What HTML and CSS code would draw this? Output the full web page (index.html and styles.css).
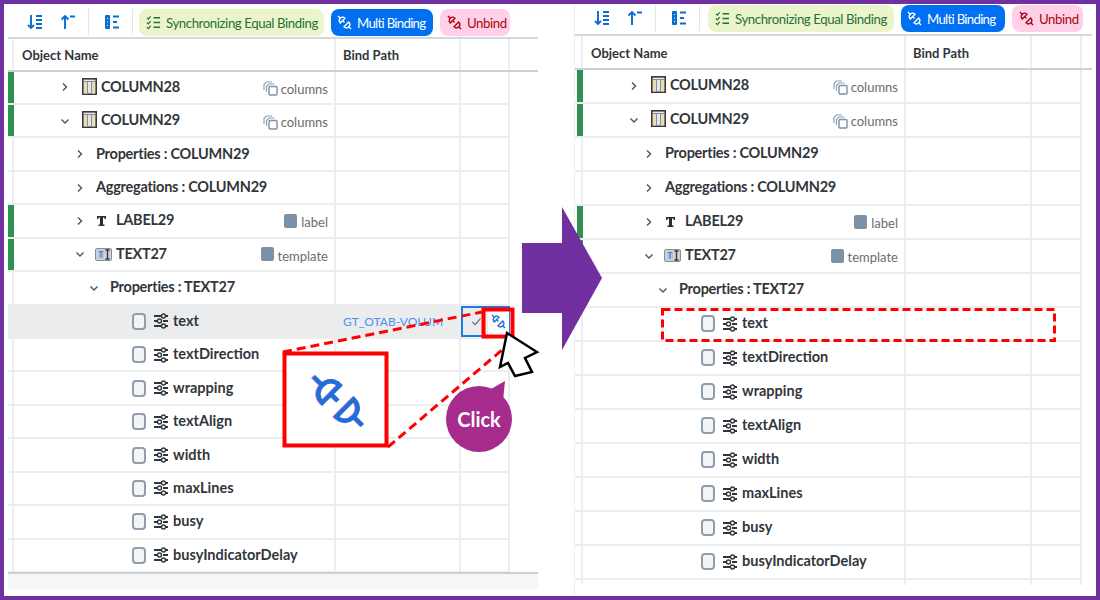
FILE: index.html
```html
<!DOCTYPE html>
<html>
  <head>
    <meta charset="utf-8">
    <title>Multi Binding - Unbind</title>
    <link rel="stylesheet" href="styles.css">
  </head>
  <body>
    <!-- icon set -->
    <svg class="defs" width="0" height="0">
      <symbol id="i-sort" viewBox="0 0 16 16"><path d="M4 1v13M1 11l3 3 3-3M9 2h6M9 6h6M9 10h6M9 14h6" fill="none" stroke="#0a6ed1" stroke-width="1.900"/></symbol>
      <symbol id="i-up" viewBox="0 0 16 16"><path d="M5 15V2M1.500 5.500 5 2l3.500 3.500M10 2.500h5" fill="none" stroke="#0a6ed1" stroke-width="1.900"/></symbol>
      <symbol id="i-tree" viewBox="0 0 16 16"><rect x="1" y="1" width="5" height="14" rx="1" fill="#0a6ed1"/><path d="M3 4.500h1M3 8h1M3 11.500h1" stroke="#fff"/><path d="M9 2.500h6M9 8h4M9 13.500h6" stroke="#0a6ed1" stroke-width="1.800"/></symbol>
      <symbol id="i-check" viewBox="0 0 16 16"><path d="M1 3l1.500 1.500L5 1.500M1 8l1.500 1.500L5 6.500M1 13l1.500 1.500L5 11.500" fill="none" stroke="#256f3a" stroke-width="1.300"/><path d="M8 3h7M8 8h7M8 13h7" stroke="#256f3a" stroke-width="1.600"/></symbol>
      <symbol id="i-bind" viewBox="0 0 16 16"><path d="M1 1l2.500 2.500M12.500 12.500 15 15M6 6l2 2" fill="none" stroke="currentColor"/><path d="M3.500 8.500l5-5C7 2 5 2 3.500 3.500S2 7 3.500 8.500z" fill="none" stroke="currentColor"/><path d="M7.500 12.500l5-5c1.500 1.500 1.500 3.500 0 5s-3.500 1.500-5 0z" fill="none" stroke="currentColor"/></symbol>
      <symbol id="i-table" viewBox="0 0 15 17"><rect x=".8" y=".8" width="13.400" height="15.400" fill="#dfe8f2" stroke="#3a3a3a" stroke-width="1.600"/><rect x="2" y="4" width="3.500" height="11.500" fill="#ecdcb4"/><rect x="9.500" y="4" width="3.500" height="11.500" fill="#ecdcb4"/><path d="M2 3.500h11M5.500 4v12M9.500 4v12" stroke="#8d8d8d"/></symbol>
      <symbol id="i-t" viewBox="0 0 15 15"><path d="M3 3h9v3h-1.500V4.500H9v7h1.500V13h-6v-1.500H6v-7H4.500V6H3z" fill="#2b2b2b"/></symbol>
      <symbol id="i-text" viewBox="0 0 17 13"><rect x=".5" y=".5" width="16" height="12" rx="1.500" fill="#cfd2d5" stroke="#8b8e91"/><rect x="3" y="2.500" width="6" height="8" fill="#a9c4e6"/><path d="M4 3.500h4M6 3.500v6" stroke="#4d7fbf" stroke-width="1.200"/><path d="M10.500 2h4M10.500 11h4M12.500 2v9" stroke="#333" stroke-width="1.300"/></symbol>
      <symbol id="i-prop" viewBox="0 0 16 16"><path d="M1 3h7M1 8h3M1 13h7M10 8h5M13 3h2M13 13h2" stroke="#32363a" stroke-width="1.800"/><circle cx="10.500" cy="3" r="2" fill="none" stroke="#32363a" stroke-width="1.400"/><circle cx="6.500" cy="8" r="2" fill="none" stroke="#32363a" stroke-width="1.400"/><circle cx="10.500" cy="13" r="2" fill="none" stroke="#32363a" stroke-width="1.400"/></symbol>
      <symbol id="i-copies" viewBox="0 0 15 15"><path d="M1 9V3.500L3.500 1H9M3.500 11V5.500L6 3h5.500" fill="none" stroke="#8ea1b5" stroke-width="1.200"/><rect x="6" y="5.500" width="8" height="8.500" rx="1" fill="none" stroke="#7b91a8" stroke-width="1.400"/></symbol>
      <symbol id="i-right" viewBox="0 0 12 12"><path d="M4 2.500 7.500 6 4 9.500" fill="none" stroke="#4a5560" stroke-width="1.400"/></symbol>
      <symbol id="i-down" viewBox="0 0 12 12"><path d="M2.500 4.500 6 8l3.500-3.500" fill="none" stroke="#4a5560" stroke-width="1.400"/></symbol>
      <symbol id="i-tick" viewBox="0 0 12 12"><path d="M1.500 6.500 4.500 9.500 10.500 2.500" fill="none" stroke="#4a6a94" stroke-width="1.200"/></symbol>
    </svg>

    <div class="frame">
      <!-- before -->
      <section class="panel before">
        <div class="toolbar">
          <svg class="tool"><use href="#i-sort"/></svg>
          <svg class="tool"><use href="#i-up"/></svg>
          <span class="sep"></span>
          <svg class="tool"><use href="#i-tree"/></svg>
          <span class="sep"></span>
          <span class="btn sync"><svg class="btn-icon"><use href="#i-check"/></svg>Synchronizing Equal Binding</span>
          <span class="btn multi"><svg class="btn-icon"><use href="#i-bind"/></svg>Multi Binding</span>
          <span class="btn unbind"><svg class="btn-icon"><use href="#i-bind"/></svg>Unbind</span>
        </div>
        <div class="head">
          <div class="gutter"></div>
          <div class="cell th first">Object Name</div>
          <div class="cell th">Bind Path</div>
          <div class="cell"></div>
        </div>

        <div class="row">
          <div class="gutter mark"></div>
          <div class="cell tree lv1"><svg class="chev"><use href="#i-right"/></svg><svg class="ico-table"><use href="#i-table"/></svg><b class="caps">COLUMN28</b><span class="role"><svg class="ico-copies"><use href="#i-copies"/></svg>columns</span></div>
          <div class="cell"></div><div class="cell"></div>
        </div>
        <div class="row">
          <div class="gutter mark"></div>
          <div class="cell tree lv1"><svg class="chev"><use href="#i-down"/></svg><svg class="ico-table"><use href="#i-table"/></svg><b class="caps">COLUMN29</b><span class="role"><svg class="ico-copies"><use href="#i-copies"/></svg>columns</span></div>
          <div class="cell"></div><div class="cell"></div>
        </div>
        <div class="row">
          <div class="gutter"></div>
          <div class="cell tree lv2"><svg class="chev"><use href="#i-right"/></svg><b class="caps">Properties : COLUMN29</b></div>
          <div class="cell"></div><div class="cell"></div>
        </div>
        <div class="row">
          <div class="gutter"></div>
          <div class="cell tree lv2"><svg class="chev"><use href="#i-right"/></svg><b class="caps">Aggregations : COLUMN29</b></div>
          <div class="cell"></div><div class="cell"></div>
        </div>
        <div class="row">
          <div class="gutter mark"></div>
          <div class="cell tree lv2 ctl"><svg class="chev"><use href="#i-right"/></svg><svg class="ico-t"><use href="#i-t"/></svg><b class="caps">LABEL29</b><span class="role"><i class="square"></i>label</span></div>
          <div class="cell"></div><div class="cell"></div>
        </div>
        <div class="row">
          <div class="gutter mark"></div>
          <div class="cell tree lv2 ctl"><svg class="chev"><use href="#i-down"/></svg><svg class="ico-text"><use href="#i-text"/></svg><b class="caps">TEXT27</b><span class="role"><i class="square"></i>template</span></div>
          <div class="cell"></div><div class="cell"></div>
        </div>
        <div class="row">
          <div class="gutter"></div>
          <div class="cell tree lv3"><svg class="chev"><use href="#i-down"/></svg><b class="caps">Properties : TEXT27</b></div>
          <div class="cell"></div><div class="cell"></div>
        </div>
        <div class="row selected">
          <div class="gutter"></div>
          <div class="cell tree item"><span class="box"></span><svg class="ico-prop"><use href="#i-prop"/></svg><b>text</b></div>
          <div class="cell path">GT_OTAB-VOLUM</div>
          <div class="cell actions"><svg class="tick"><use href="#i-tick"/></svg><span class="unlink"><svg><use href="#i-bind"/></svg></span></div>
        </div>
        <div class="row"><div class="gutter"></div><div class="cell tree item"><span class="box"></span><svg class="ico-prop"><use href="#i-prop"/></svg><b>textDirection</b></div><div class="cell"></div><div class="cell"></div></div>
        <div class="row"><div class="gutter"></div><div class="cell tree item"><span class="box"></span><svg class="ico-prop"><use href="#i-prop"/></svg><b>wrapping</b></div><div class="cell"></div><div class="cell"></div></div>
        <div class="row"><div class="gutter"></div><div class="cell tree item"><span class="box"></span><svg class="ico-prop"><use href="#i-prop"/></svg><b>textAlign</b></div><div class="cell"></div><div class="cell"></div></div>
        <div class="row"><div class="gutter"></div><div class="cell tree item"><span class="box"></span><svg class="ico-prop"><use href="#i-prop"/></svg><b>width</b></div><div class="cell"></div><div class="cell"></div></div>
        <div class="row"><div class="gutter"></div><div class="cell tree item"><span class="box"></span><svg class="ico-prop"><use href="#i-prop"/></svg><b>maxLines</b></div><div class="cell"></div><div class="cell"></div></div>
        <div class="row"><div class="gutter"></div><div class="cell tree item"><span class="box"></span><svg class="ico-prop"><use href="#i-prop"/></svg><b>busy</b></div><div class="cell"></div><div class="cell"></div></div>
        <div class="row"><div class="gutter"></div><div class="cell tree item"><span class="box"></span><svg class="ico-prop"><use href="#i-prop"/></svg><b>busyIndicatorDelay</b></div><div class="cell"></div><div class="cell"></div></div>
        <div class="foot"></div>
      </section>

      <!-- after -->
      <section class="panel after">
        <div class="toolbar">
          <svg class="tool"><use href="#i-sort"/></svg>
          <svg class="tool"><use href="#i-up"/></svg>
          <span class="sep"></span>
          <svg class="tool"><use href="#i-tree"/></svg>
          <span class="sep"></span>
          <span class="btn sync"><svg class="btn-icon"><use href="#i-check"/></svg>Synchronizing Equal Binding</span>
          <span class="btn multi"><svg class="btn-icon"><use href="#i-bind"/></svg>Multi Binding</span>
          <span class="btn unbind"><svg class="btn-icon"><use href="#i-bind"/></svg>Unbind</span>
        </div>
        <div class="head">
          <div class="gutter"></div>
          <div class="cell th first">Object Name</div>
          <div class="cell th">Bind Path</div>
          <div class="cell"></div>
        </div>

        <div class="row">
          <div class="gutter mark"></div>
          <div class="cell tree lv1"><svg class="chev"><use href="#i-right"/></svg><svg class="ico-table"><use href="#i-table"/></svg><b class="caps">COLUMN28</b><span class="role"><svg class="ico-copies"><use href="#i-copies"/></svg>columns</span></div>
          <div class="cell"></div><div class="cell"></div>
        </div>
        <div class="row">
          <div class="gutter mark"></div>
          <div class="cell tree lv1"><svg class="chev"><use href="#i-down"/></svg><svg class="ico-table"><use href="#i-table"/></svg><b class="caps">COLUMN29</b><span class="role"><svg class="ico-copies"><use href="#i-copies"/></svg>columns</span></div>
          <div class="cell"></div><div class="cell"></div>
        </div>
        <div class="row">
          <div class="gutter"></div>
          <div class="cell tree lv2"><svg class="chev"><use href="#i-right"/></svg><b class="caps">Properties : COLUMN29</b></div>
          <div class="cell"></div><div class="cell"></div>
        </div>
        <div class="row">
          <div class="gutter"></div>
          <div class="cell tree lv2"><svg class="chev"><use href="#i-right"/></svg><b class="caps">Aggregations : COLUMN29</b></div>
          <div class="cell"></div><div class="cell"></div>
        </div>
        <div class="row">
          <div class="gutter mark"></div>
          <div class="cell tree lv2 ctl"><svg class="chev"><use href="#i-right"/></svg><svg class="ico-t"><use href="#i-t"/></svg><b class="caps">LABEL29</b><span class="role"><i class="square"></i>label</span></div>
          <div class="cell"></div><div class="cell"></div>
        </div>
        <div class="row">
          <div class="gutter mark"></div>
          <div class="cell tree lv2 ctl"><svg class="chev"><use href="#i-down"/></svg><svg class="ico-text"><use href="#i-text"/></svg><b class="caps">TEXT27</b><span class="role"><i class="square"></i>template</span></div>
          <div class="cell"></div><div class="cell"></div>
        </div>
        <div class="row">
          <div class="gutter"></div>
          <div class="cell tree lv3"><svg class="chev"><use href="#i-down"/></svg><b class="caps">Properties : TEXT27</b></div>
          <div class="cell"></div><div class="cell"></div>
        </div>
        <div class="row"><div class="gutter"></div><div class="cell tree item"><span class="box"></span><svg class="ico-prop"><use href="#i-prop"/></svg><b>text</b></div><div class="cell"></div><div class="cell"></div></div>
        <div class="row"><div class="gutter"></div><div class="cell tree item"><span class="box"></span><svg class="ico-prop"><use href="#i-prop"/></svg><b>textDirection</b></div><div class="cell"></div><div class="cell"></div></div>
        <div class="row"><div class="gutter"></div><div class="cell tree item"><span class="box"></span><svg class="ico-prop"><use href="#i-prop"/></svg><b>wrapping</b></div><div class="cell"></div><div class="cell"></div></div>
        <div class="row"><div class="gutter"></div><div class="cell tree item"><span class="box"></span><svg class="ico-prop"><use href="#i-prop"/></svg><b>textAlign</b></div><div class="cell"></div><div class="cell"></div></div>
        <div class="row"><div class="gutter"></div><div class="cell tree item"><span class="box"></span><svg class="ico-prop"><use href="#i-prop"/></svg><b>width</b></div><div class="cell"></div><div class="cell"></div></div>
        <div class="row"><div class="gutter"></div><div class="cell tree item"><span class="box"></span><svg class="ico-prop"><use href="#i-prop"/></svg><b>maxLines</b></div><div class="cell"></div><div class="cell"></div></div>
        <div class="row"><div class="gutter"></div><div class="cell tree item"><span class="box"></span><svg class="ico-prop"><use href="#i-prop"/></svg><b>busy</b></div><div class="cell"></div><div class="cell"></div></div>
        <div class="row"><div class="gutter"></div><div class="cell tree item"><span class="box"></span><svg class="ico-prop"><use href="#i-prop"/></svg><b>busyIndicatorDelay</b></div><div class="cell"></div><div class="cell"></div></div>
        <div class="row tail"><div class="gutter"></div><div class="cell"></div><div class="cell"></div><div class="cell"></div></div>
      </section>

      <!-- annotations over the screenshots -->
      <svg class="notes" viewBox="0 0 1100 600">
        <path d="M522 243h40v-36l40 71-40 72v-37h-40z" fill="#7030a0"/>
        <path d="M283 352 482 312" stroke="#f00" stroke-width="3" stroke-dasharray="9 5"/>
        <path d="M388 447 502 350" stroke="#f00" stroke-width="3" stroke-dasharray="9 5"/>
        <rect x="483.500" y="309.500" width="29" height="27" fill="none" stroke="#f00" stroke-width="4"/>
        <rect x="284.500" y="353.500" width="102" height="92" fill="#fff" stroke="#f00" stroke-width="4"/>
        <use class="big-bind" href="#i-bind" x="310" y="373" width="56" height="56"/>
        <path d="M507 333 537 352 525 358 532 372 515 376 508 363 500 367z" fill="#fff" stroke="#000" stroke-width="2.500"/>
        <path d="M505 381 491 389 503 401z" fill="#a62b8c"/>
        <rect x="662.500" y="309.500" width="392" height="31" fill="none" stroke="#f00" stroke-width="3" stroke-dasharray="8 4"/>
      </svg>
      <div class="bubble">Click</div>
    </div>
  </body>
</html>
```

FILE: styles.css
```css
html, body {
  margin: 0;
  padding: 0;
  background: #fff;
}
.defs {
  position: absolute;
}
.frame {
  position: relative;
  width: 1100px;
  height: 600px;
  box-sizing: border-box;
  border: 4px solid #7030a0;
  display: flex;
  gap: 37px;
  overflow: hidden;
  font-family: Lato, "Noto Sans", sans-serif;
  color: #32363a;
  background: #fff;
}
.panel {
  flex: none;
  display: flex;
  flex-direction: column;
}
.before {
  width: 530px;
  margin-left: 4px;
  --row: 33.45px;
  --cols: 6px 322px 125px 49px;
  --gutter-gap: 0px;
  --head: 32.5px;
  --bar: 33px;
  --bar-pad: 5px;
  --sync-gap: -9px;
}
.after {
  width: 517px;
  --row: 34px;
  --cols: 8px 323px 126px 50px;
  --gutter-gap: 2px;
  --head: 33.5px;
  --bar: 30px;
  --bar-pad: 1px;
  --sync-gap: -7px;
  box-shadow: -1px 0 #eeeff0;
}

/* toolbar */
.toolbar {
  display: flex;
  align-items: flex-start;
  padding: var(--bar-pad) 0 0 19px;
  border-bottom: 2px solid #d3d8dd;
  height: calc(var(--bar) - var(--bar-pad));
}
.tool {
  width: 16px;
  height: 16px;
  margin-top: 5px;
  margin-right: 17px;
}
.tool + .sep {
  margin-left: -5px;
}
.sep {
  width: 1px;
  height: 26px;
  margin-right: 15px;
  background: #e4e7ea;
}
.sep + .btn {
  margin-left: var(--sync-gap);
}
.btn {
  flex: none;
  display: flex;
  align-items: center;
  height: 27px;
  box-sizing: border-box;
  padding: 0 0 0 7px;
  margin-right: 7px;
  border-radius: 8px;
  font-size: 13.200px;
  letter-spacing: -.4px;
  white-space: nowrap;
  stroke-width: 1.500;
}
.btn-icon {
  flex: none;
  width: 15px;
  height: 15px;
  margin-right: 5px;
}
.sync {
  width: 185px;
  background: #ebf5cb;
  color: #256f3a;
}
.multi {
  width: 102px;
  padding-left: 6px;
  background: #0070f2;
  color: #fff;
  letter-spacing: -.7px;
}
.unbind {
  width: 70px;
  background: #ffd0e7;
  color: #aa0808;
}
.after .sync {
  width: 186px;
}
.after .multi {
  width: 104px;
}
.after .unbind {
  width: 71px;
}

/* table */
.head, .row {
  display: grid;
  grid-template-columns: var(--cols);
}
.head {
  flex: none;
  height: var(--head);
  box-sizing: border-box;
  border-bottom: 2px solid #c9d0d6;
}
.row {
  flex: none;
  width: fit-content;
  height: var(--row);
  box-sizing: border-box;
  border-bottom: 2px solid #ebedef;
}
.tail {
  height: 5px;
  border-bottom: 0;
}
.gutter {
  border-right: 2px solid #ebedef;
}
.row .mark {
  background: #2f9150;
  border-right: 0;
  margin-left: var(--gutter-gap);
}
.cell {
  display: flex;
  align-items: center;
  min-width: 0;
  border-right: 2px solid #ebedef;
}
.th {
  padding-left: 7px;
  padding-top: 2px;
  font-size: 13px;
  font-weight: 700;
}
.first {
  padding-left: 8px;
}
.tree b {
  margin-bottom: 2px;
  font-size: 14.500px;
  font-weight: 700;
  white-space: nowrap;
}
.tree b.caps {
  letter-spacing: -.25px;
}
.chev {
  flex: none;
  width: 12px;
  height: 12px;
}
.lv1 {
  padding-left: 45px;
}
.lv2 {
  padding-left: 60px;
}
.lv3 {
  padding-left: 74px;
}
.lv2 .chev, .lv3 .chev {
  margin-right: 10px;
}
.ico-table {
  flex: none;
  width: 15px;
  height: 17px;
  margin: 0 4px 2px 11px;
}
.lv2.ctl .chev {
  margin-right: 8px;
}
.ico-t {
  flex: none;
  width: 15px;
  height: 15px;
  margin-right: 7px;
}
.ico-text {
  flex: none;
  width: 17px;
  height: 13px;
  margin-left: 1px;
  margin-right: 4px;
}
.role {
  margin-left: auto;
  padding-right: 6px;
  padding-top: 3px;
  display: flex;
  align-items: center;
  font-size: 13px;
  color: #6a6d70;
}
.ico-copies {
  flex: none;
  width: 15px;
  height: 15px;
  margin-right: 3px;
}
.square {
  width: 13px;
  height: 14px;
  border-radius: 2px;
  background: #7b91a8;
  margin: -3px 4px 0 0;
}
.item {
  padding-left: 118px;
}
.box {
  flex: none;
  width: 14px;
  height: 17px;
  box-sizing: border-box;
  border: 2px solid #8e9eaf;
  border-radius: 4px;
  background: #f2f4f5;
  margin-right: 7px;
}
.ico-prop {
  flex: none;
  width: 16px;
  height: 16px;
  margin-right: 4px;
}
.selected {
  background: #eaecee;
}
.path {
  padding-left: 7px;
  font-size: 12px;
  color: #4d8fe8;
  white-space: nowrap;
  overflow: hidden;
}
.actions {
  border: 2px solid #1a7de0;
  box-sizing: border-box;
  gap: 6px;
  padding-left: 8px;
}
.tick {
  flex: none;
  width: 11px;
  height: 11px;
}
.unlink {
  flex: none;
  display: flex;
  align-items: center;
  justify-content: center;
  width: 21px;
  height: 100%;
  background: #fff;
  color: #1f6fd8;
  stroke-width: 1.500;
}
.unlink svg {
  width: 15px;
  height: 15px;
}
.foot {
  height: 15px;
  background: #f5f6f7;
  border-top: 2px solid #c9d0d6;
  margin-top: -1px;
}

/* annotations */
.notes {
  position: absolute;
  left: -4px;
  top: -4px;
  width: 1100px;
  height: 600px;
  pointer-events: none;
}
.big-bind {
  color: #1f6fd8;
  stroke-width: 1.300;
  filter: drop-shadow(-1px 0 0 #e58ad6) blur(.6px);
}
.bubble {
  position: absolute;
  left: 442px;
  top: 382px;
  width: 66px;
  height: 66px;
  border-radius: 50%;
  background: #a62b8c;
  color: #fff;
  font-size: 20px;
  font-weight: 700;
  display: flex;
  align-items: center;
  justify-content: center;
}
```
